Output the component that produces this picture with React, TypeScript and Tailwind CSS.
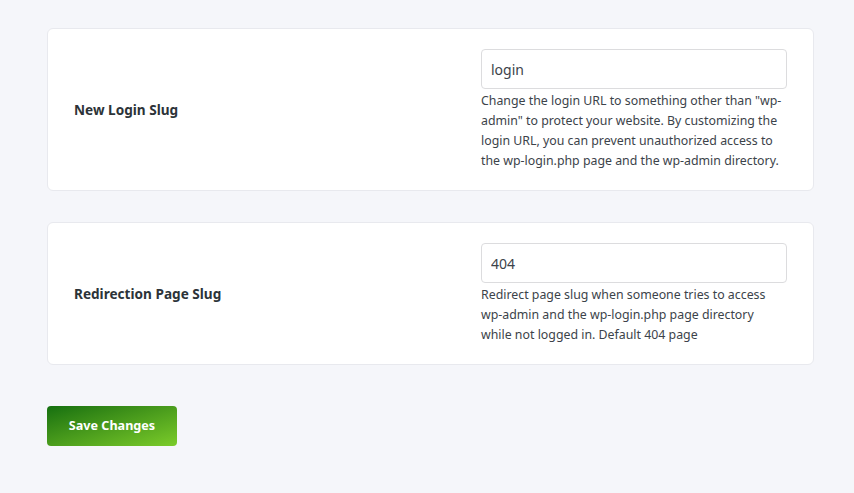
export default function App() {
  const rows = [
    {
      label: "New Login Slug",
      value: "login",
      help: 'Change the login URL to something other than "wp-admin" to protect your website. By customizing the login URL, you can prevent unauthorized access to the wp-login.php page and the wp-admin directory.',
    },
    {
      label: "Redirection Page Slug",
      value: "404",
      help: "Redirect page slug when someone tries to access wp-admin and the wp-login.php page directory while not logged in. Default 404 page",
    },
  ];

  return (
    <div
      className="min-h-[493px] bg-[#f5f6fa] px-[47px] pt-[28px] text-[12.35px] text-[#3c434a]"
      style={{ fontFamily: '"Noto Sans", "Open Sans", sans-serif' }}
    >
      <div className="w-[767px] space-y-[31px]">
        {rows.map((row) => (
          <div
            key={row.label}
            className="flex items-center rounded-[6px] border border-[#e8e9ee] bg-white px-[26px] pt-[20px] pb-[19px]"
          >
            <div className="w-[407px] text-[13.6px] font-bold text-[#2c3338]">{row.label}</div>
            <div className="w-[306px]">
              <input
                defaultValue={row.value}
                className="h-[40px] w-full rounded-[4px] border border-[#dcdcde] bg-white px-[9px] text-[14px] text-[#3c434a] outline-none"
              />
              <p className="mt-[2px] leading-[20px]">{row.help}</p>
            </div>
          </div>
        ))}
      </div>
      <button className="mt-[41px] h-[40px] w-[130px] rounded-[4px] bg-gradient-to-br from-[#137010] to-[#7bcc2a] text-[12.6px] font-bold text-white">
        Save Changes
      </button>
    </div>
  );
}
